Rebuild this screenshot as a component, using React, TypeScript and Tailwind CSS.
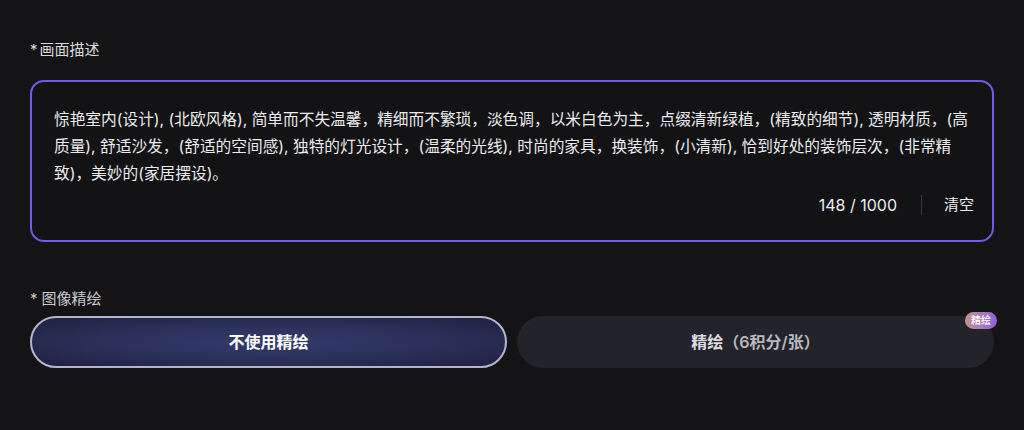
import { useState } from 'react'

const font = "font-['Inter','Noto_Sans_CJK_SC',sans-serif]"

const PROMPT =
  '惊艳室内(设计), (北欧风格), 简单而不失温馨，精细而不繁琐，淡色调，以米白色为主，点缀清新绿植，(精致的细节), 透明材质，(高质量), 舒适沙发，(舒适的空间感), 独特的灯光设计，(温柔的光线), 时尚的家具，换装饰，(小清新), 恰到好处的装饰层次，(非常精致)，美妙的(家居摆设)。'

export default function App() {
  const [refine, setRefine] = useState(false)

  return (
    <div className={`w-[1024px] h-[430px] bg-[#141416] px-[30px] pt-[40px] ${font}`}>
      <label className="block text-[15px] leading-[20px] text-[#dadadd]">
        <span className="mr-[2px]">*</span>画面描述
      </label>

      {/* Prompt box */}
      <div className="mt-[20px] h-[162px] rounded-[14px] border-2 border-[#6f5ce6] bg-[#131316] pl-[22px] pr-[12px] pt-[24px] flex flex-col">
        <p className="text-[15.7px] leading-[27px] text-[#ebebed]">{PROMPT}</p>
        <div className="mt-auto mb-[25px] pr-[6px] flex items-center justify-end text-[16px] leading-[20px] text-[#ebebed]">
          <span>148 / 1000</span>
          <span className="ml-[24px] mr-[22px] h-[20px] w-px bg-[#3a3a40]" />
          <button type="button" className="text-[15px] text-[#ececee]">清空</button>
        </div>
      </div>

      <label className="mt-[47px] block text-[15px] leading-[20px] text-[#c9c9cd]">
        <span className="mr-[4px]">*</span>图像精绘
      </label>

      <div className="mt-[7px] grid grid-cols-2 gap-[10px]">
        <button
          type="button"
          onClick={() => setRefine(false)}
          className={`h-[52px] rounded-full text-[16px] font-bold text-white ${
            !refine
              ? 'border-2 border-[#b4b5c8] bg-[radial-gradient(ellipse_at_center,#353c6c_0%,#2a2f58_55%,#1e2040_100%)]'
              : 'bg-[#23242a]'
          }`}
        >
          不使用精绘
        </button>
        <button
          type="button"
          onClick={() => setRefine(true)}
          className={`relative h-[52px] rounded-full text-[16px] font-bold text-[#dcdce0] ${
            refine
              ? 'border-2 border-[#b4b5c8] bg-[radial-gradient(ellipse_at_center,#353c6c_0%,#2a2f58_55%,#1e2040_100%)]'
              : 'bg-[#23242a]'
          }`}
        >
          精绘<span className="font-semibold text-[#b9b9c0]">（6积分/张）</span>
          <span className="absolute right-[-3px] top-[-4px] rounded-full bg-gradient-to-r from-[#c98f8a] to-[#8a5fe0] px-[6px] py-[1px] text-[10px] leading-[15px] font-medium text-white">
            精绘
          </span>
        </button>
      </div>
    </div>
  )
}
